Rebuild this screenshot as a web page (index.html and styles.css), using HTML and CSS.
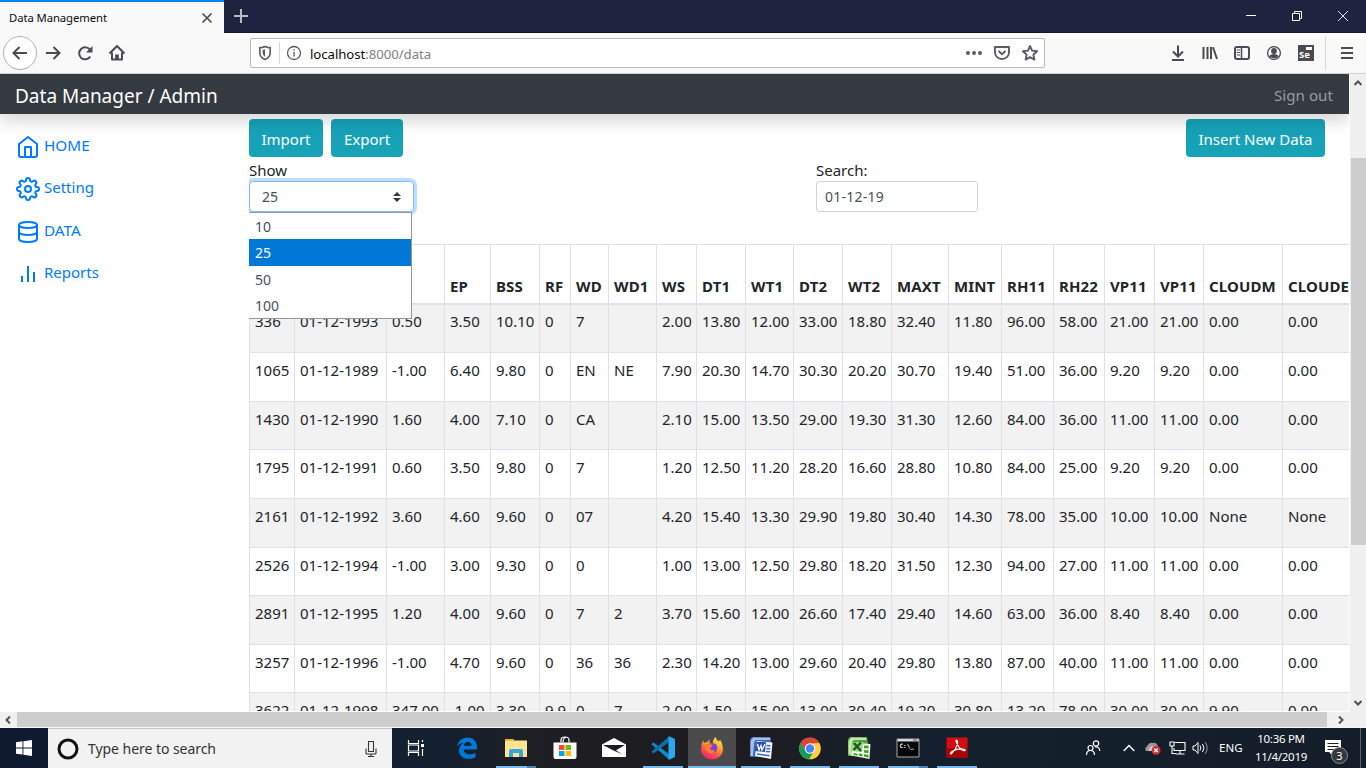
FILE: index.html
```html
<!DOCTYPE html>
<html lang="en">
<head>
<meta charset="utf-8">
<title>Data Management</title>
<link rel="stylesheet" href="styles.css">
</head>
<body>
<div class="screen">
  <header class="titlebar">
    <div class="tab"><span class="tab-title">Data Management</span>
      <svg class="tab-close" width="12" height="12" viewBox="0 0 12 12"><path d="M1.500 1.500l9 9M10.500 1.500l-9 9" stroke="#4a4a4f" stroke-width="1.600"/></svg></div>
    <svg class="new-tab" width="16" height="16" viewBox="0 0 16 16"><path d="M8 1v14M1 8h14" stroke="#b9bac6" stroke-width="2"/></svg>
    <div class="win-controls">
      <svg width="12" height="12" viewBox="0 0 12 12"><path d="M1 5.500h10" stroke="#fff"/></svg>
      <svg width="12" height="12" viewBox="0 0 12 12"><path d="M1.500 3.500h7v7h-7zM3.500 3.500v-2h7v7h-2" stroke="#fff" fill="none"/></svg>
      <svg width="12" height="12" viewBox="0 0 12 12"><path d="M1 1l10 10M11 1L1 11" stroke="#fff" stroke-width=".9"/></svg>
    </div>
  </header>

  <div class="toolbar">
    <div class="nav-icons">
      <span class="back"><svg width="18" height="18" viewBox="0 0 18 18"><path d="M16 9H2.500M8.500 3l-6 6 6 6"/></svg></span>
      <svg width="18" height="18" viewBox="0 0 18 18"><path d="M2 9h13.500M9.500 3l6 6-6 6"/></svg>
      <svg width="18" height="18" viewBox="0 0 18 18"><path d="M14.200 12.600A6 6 0 1 1 14 5.800"/><path d="M16.500 2v6.500H10z" fill="#4a4a4f" stroke="none"/></svg>
      <svg width="18" height="18" viewBox="0 0 18 18"><path d="M1.500 9.500L9 2l7.500 7.500M4 8.500V15.500h10V8.500" stroke-linejoin="round"/><path d="M7.200 15.500v-5h3.600v5z" fill="#4a4a4f" stroke="none"/></svg>
    </div>
    <div class="urlbar">
      <svg class="shield" width="14" height="16" viewBox="0 0 14 16"><path d="M1.800 2.800Q5 2.500 7 1.500q2 1 5.200 1.300v4.700q0 5-5.200 7-5.200-2-5.200-7z" fill="none" stroke="#5b5b60" stroke-width="1.600"/><path d="M7 4.300v7.500q-2.400-1.600-2.400-4.500V5z" fill="#5b5b60" stroke="none"/></svg>
      <span class="url-sep"></span>
      <svg class="info" width="16" height="16" viewBox="0 0 16 16"><circle cx="8" cy="8" r="6.500"/><path d="M8 7v4.500M8 4.200v1.600"/></svg>
      <span class="url"><b>localhost</b>:8000/data</span>
      <svg class="dots" width="18" height="16" viewBox="0 0 18 16"><g fill="#5b5b60"><circle cx="3" cy="8" r="2"/><circle cx="9" cy="8" r="2"/><circle cx="15" cy="8" r="2"/></g></svg>
      <svg class="pocket" width="18" height="16" viewBox="0 0 18 16"><path d="M2 2h14v5.500a7 6.500 0 0 1-14 0z" stroke-linejoin="round"/><path d="M5.500 6L9 9.300 12.500 6"/></svg>
      <svg class="star" width="18" height="18" viewBox="0 0 18 18"><path d="M9 2l2.100 4.600 5 .6-3.700 3.400 1 5L9 13.100l-4.400 2.500 1-5L1.900 7.200l5-.6z" stroke-linejoin="round"/></svg>
    </div>
    <div class="tool-icons">
      <svg width="16" height="18" viewBox="0 0 16 18"><path d="M8 1.500V12M3 7.500l5 5 5-5M2 16h12"/></svg>
      <svg width="16" height="16" viewBox="0 0 16 16"><path d="M1.500 2v12M5.500 2v12M9 2v12M11 2.300l4 11.700"/></svg>
      <svg width="18" height="16" viewBox="0 0 18 16"><rect x="2" y="2" width="14" height="12" rx="2"/><path d="M8.500 2v12" stroke-width="1.500"/><path d="M4 5h3M4 7.500h3M4 10h3" stroke-width="1"/></svg>
      <svg class="account" width="16" height="16" viewBox="0 0 16 16"><circle cx="8" cy="8" r="6.400"/><circle cx="8" cy="6" r="2.900" fill="#4a4a4f" stroke="none"/><path d="M3.200 11q2-2 4.800-2t4.800 2Q11 13.300 8 13.300T3.200 11z" fill="#4a4a4f" stroke="none"/></svg>
      <span class="se"><i></i>Se</span>
      <span class="tool-sep"></span>
      <svg width="14" height="14" viewBox="0 0 14 14"><path d="M1 2h12M1 7h12M1 12h12"/></svg>
    </div>
  </div>

  <div class="viewport">
    <div class="page">
      <nav class="navbar"><span class="brand">Data Manager / Admin</span><a class="signout">Sign out</a></nav>
      <div class="body">
        <aside class="sidebar">
          <a><svg viewBox="0 0 24 24"><path d="M3 9l9-7 9 7v11a2 2 0 0 1-2 2H5a2 2 0 0 1-2-2z"/><path d="M9 22V12h6v10"/></svg><span class="caps">HOME</span></a>
          <a><svg viewBox="0 0 24 24"><circle cx="12" cy="12" r="3"/><path d="M19.400 15a1.650 1.650 0 0 0 .33 1.820l.06.06a2 2 0 0 1-2.830 2.830l-.06-.06a1.650 1.650 0 0 0-1.820-.33 1.650 1.650 0 0 0-1 1.510V21a2 2 0 0 1-4 0v-.09A1.650 1.650 0 0 0 9 19.400a1.650 1.650 0 0 0-1.820.33l-.06.06a2 2 0 0 1-2.830-2.830l.06-.06a1.650 1.650 0 0 0 .33-1.820 1.650 1.650 0 0 0-1.510-1H3a2 2 0 0 1 0-4h.09A1.650 1.650 0 0 0 4.600 9a1.650 1.650 0 0 0-.33-1.820l-.06-.06a2 2 0 0 1 2.830-2.830l.06.06a1.650 1.650 0 0 0 1.820.33H9a1.650 1.650 0 0 0 1-1.510V3a2 2 0 0 1 4 0v.09a1.650 1.650 0 0 0 1 1.510 1.650 1.650 0 0 0 1.820-.33l.06-.06a2 2 0 0 1 2.830 2.830l-.06.06a1.650 1.650 0 0 0-.33 1.820V9a1.650 1.650 0 0 0 1.510 1H21a2 2 0 0 1 0 4h-.09a1.650 1.650 0 0 0-1.510 1z"/></svg><span>Setting</span></a>
          <a><svg viewBox="0 0 24 24"><ellipse cx="12" cy="5" rx="9" ry="3"/><path d="M21 12c0 1.660-4 3-9 3s-9-1.340-9-3"/><path d="M3 5v14c0 1.660 4 3 9 3s9-1.340 9-3V5"/></svg><span class="caps">DATA</span></a>
          <a><svg viewBox="0 0 24 24"><path d="M18 20V10M12 20V4M6 20v-6"/></svg><span>Reports</span></a>
        </aside>
        <main class="main">
          <div class="actions">
            <button class="btn import">Import</button><button class="btn export">Export</button><button class="btn insert">Insert New Data</button>
          </div>
          <div class="filters">
            <div class="show">
              <label>Show</label>
              <div class="select"><span>25</span><svg width="8" height="10" viewBox="0 0 8 10"><path d="M4 0l4 4H0zM4 10l4-4H0z" fill="#343a40"/></svg>
                <div class="options"><div>10</div><div class="on">25</div><div>50</div><div>100</div></div>
              </div>
            </div>
            <div class="search"><label>Search:</label><div class="input">01-12-19</div></div>
          </div>
          <table class="data">
            <colgroup><col style="width:45px"><col style="width:92px"><col style="width:58px"><col style="width:46px"><col style="width:49px"><col style="width:31px"><col style="width:38px"><col style="width:48px"><col style="width:40px"><col style="width:49px"><col style="width:48px"><col style="width:49px"><col style="width:49px"><col style="width:57px"><col style="width:53px"><col style="width:52px"><col style="width:51px"><col style="width:50px"><col style="width:49px"><col style="width:79px"><col style="width:79px"></colgroup>
            <thead><tr><th><th><th><th>EP<th>BSS<th>RF<th>WD<th>WD1<th>WS<th>DT1<th>WT1<th>DT2<th>WT2<th>MAXT<th>MINT<th>RH11<th>RH22<th>VP11<th>VP11<th>CLOUDM<th>CLOUDE</tr></thead>
            <tbody>
              <tr><td>336<td>01-12-1993<td>0.50<td>3.50<td>10.10<td>0<td>7<td><td>2.00<td>13.80<td>12.00<td>33.00<td>18.80<td>32.40<td>11.80<td>96.00<td>58.00<td>21.00<td>21.00<td>0.00<td>0.00</tr>
              <tr><td>1065<td>01-12-1989<td>-1.00<td>6.40<td>9.80<td>0<td>EN<td>NE<td>7.90<td>20.30<td>14.70<td>30.30<td>20.20<td>30.70<td>19.40<td>51.00<td>36.00<td>9.20<td>9.20<td>0.00<td>0.00</tr>
              <tr><td>1430<td>01-12-1990<td>1.60<td>4.00<td>7.10<td>0<td>CA<td><td>2.10<td>15.00<td>13.50<td>29.00<td>19.30<td>31.30<td>12.60<td>84.00<td>36.00<td>11.00<td>11.00<td>0.00<td>0.00</tr>
              <tr><td>1795<td>01-12-1991<td>0.60<td>3.50<td>9.80<td>0<td>7<td><td>1.20<td>12.50<td>11.20<td>28.20<td>16.60<td>28.80<td>10.80<td>84.00<td>25.00<td>9.20<td>9.20<td>0.00<td>0.00</tr>
              <tr><td>2161<td>01-12-1992<td>3.60<td>4.60<td>9.60<td>0<td>07<td><td>4.20<td>15.40<td>13.30<td>29.90<td>19.80<td>30.40<td>14.30<td>78.00<td>35.00<td>10.00<td>10.00<td>None<td>None</tr>
              <tr><td>2526<td>01-12-1994<td>-1.00<td>3.00<td>9.30<td>0<td>0<td><td>1.00<td>13.00<td>12.50<td>29.80<td>18.20<td>31.50<td>12.30<td>94.00<td>27.00<td>11.00<td>11.00<td>0.00<td>0.00</tr>
              <tr><td>2891<td>01-12-1995<td>1.20<td>4.00<td>9.60<td>0<td>7<td>2<td>3.70<td>15.60<td>12.00<td>26.60<td>17.40<td>29.40<td>14.60<td>63.00<td>36.00<td>8.40<td>8.40<td>0.00<td>0.00</tr>
              <tr><td>3257<td>01-12-1996<td>-1.00<td>4.70<td>9.60<td>0<td>36<td>36<td>2.30<td>14.20<td>13.00<td>29.60<td>20.40<td>29.80<td>13.80<td>87.00<td>40.00<td>11.00<td>11.00<td>0.00<td>0.00</tr>
              <tr><td>3622<td>01-12-1998<td>347.00<td>-1.00<td>3.30<td>9.9<td>0<td>7<td>2.00<td>1.50<td>15.00<td>13.00<td>30.40<td>19.20<td>30.80<td>13.20<td>78.00<td>30.00<td>30.00<td>9.90<td>0.00</tr>
            </tbody>
          </table>
        </main>
      </div>
    </div>
    <div class="vscroll">
      <svg width="8" height="6" viewBox="0 0 8 6"><path d="M.5 5L4 1.500 7.500 5"/></svg>
      <span class="vthumb"></span>
      <svg class="down" width="8" height="6" viewBox="0 0 8 6"><path d="M.5 1L4 4.500 7.500 1"/></svg>
    </div>
  </div>
  <div class="hscroll">
    <svg width="6" height="8" viewBox="0 0 6 8"><path d="M5 .5L1.500 4 5 7.500"/></svg>
    <span class="hthumb"></span>
    <svg width="6" height="8" viewBox="0 0 6 8"><path d="M1 .5L4.500 4 1 7.500"/></svg>
  </div>

  <footer class="taskbar">
    <div class="start"><svg width="16" height="16" viewBox="0 0 16 16"><path d="M0 2.200L6.500 1.300V7.500H0zM7.400 1.200L16 0v7.500H7.400zM0 8.400h6.500v6.200L0 13.700zM7.400 8.400H16V16l-8.600-1.200z" fill="#fff"/></svg></div>
    <div class="task-search">
      <svg width="22" height="22" viewBox="0 0 22 22"><circle cx="11" cy="11" r="9" fill="none" stroke="#111" stroke-width="3"/></svg>
      <span>Type here to search</span>
      <svg width="12" height="18" viewBox="0 0 12 18"><path d="M3.500 1.500h5v10h-5zM1 8.500v4.500q0 1 1 1h8q1 0 1-1V8.500M6 14v2.500M3 16.500h6" fill="none" stroke="#333" stroke-width="1.100"/></svg>
    </div>
    <div class="taskview"><svg width="18" height="18" viewBox="0 0 18 18"><path d="M1.500 1v3.500h10V1M1.500 17v-3.500h10V17M1.500 6h10v6h-10zM15.500 1v2M15.500 10v7" fill="none" stroke="#fff" stroke-width="1.200"/><path d="M14 5h3v3h-3z" fill="#fff"/></svg></div>
    <div class="apps">
      <div class="app"><svg width="24" height="24" viewBox="0 0 24 24"><path d="M2 10.500C3 5 7 1.500 12.500 1.500 18.500 1.500 22 5.500 22 11v2.500H8.700c.2 3 2.500 4.800 5.800 4.800 2.300 0 4.300-.6 6-1.600v4.600c-2 1-4.300 1.500-6.800 1.500C7.500 22.800 4 19.300 4 14.500c0-3.300 1.800-6.200 4.700-7.700C6 7 3.500 8.300 2 10.500zM8.900 9.800h7.600c-.1-2.500-1.300-3.900-3.600-3.900-2.200 0-3.600 1.400-4 3.900z" fill="#0078d7"/></svg></div>
      <div class="app open split"><svg width="24" height="24" viewBox="0 0 24 24"><path d="M1 3h8l1.500 1.500H23V21H1z" fill="#ffe391"/><path d="M1 3h8l1 2H1z" fill="#f0b62b"/><path d="M5 21v-6q0-2 2-2h10q2 0 2 2v6h-4v-4H9v4z" fill="#35a5dc"/></svg></div>
      <div class="app"><svg width="24" height="24" viewBox="0 0 24 24"><path d="M.5 6.500h23V21q0 2-2 2h-19q-2 0-2-2z" fill="#fff"/><path d="M8 6.500V4q0-3 4-3t4 3v2.500M10 6.500q0-5 3-5" fill="none" stroke="#fff" stroke-width="1.200"/><path d="M6 9h5.500v5H6z" fill="#f25022"/><path d="M12.500 9H18v5h-5.500z" fill="#7fba00"/><path d="M6 15h5.500v5H6z" fill="#00a4ef"/><path d="M12.500 15H18v5h-5.500z" fill="#ffb900"/></svg></div>
      <div class="app"><svg width="24" height="24" viewBox="0 0 24 24"><path d="M0 8.500L12 2l12 6.500V21H0z" fill="#fff"/><path d="M1 9h22l-9 5.200 6 4L10.500 14z" fill="#1c1c20"/></svg></div>
      <div class="app open"><svg width="24" height="24" viewBox="0 0 24 24"><path d="M.3 8.300L2.500 6.500 18 18v5.500z" fill="#1687c9"/><path d="M.3 15.700l2.200 1.800L18 6V.5z" fill="#0a6fb0"/><path d="M17.500 0L24 3v18l-6.500 3z" fill="#2ba8ed"/></svg></div>
      <div class="app active"><svg width="24" height="24" viewBox="0 0 24 24"><defs><linearGradient id="fx" x1=".8" y1="0" x2=".3" y2="1"><stop offset="0" stop-color="#fff14f"/><stop offset=".4" stop-color="#ffa027"/><stop offset=".75" stop-color="#ff4455"/><stop offset="1" stop-color="#e32277"/></linearGradient></defs><path d="M3 4.500l1.500 2.500Q6 5.500 7.500 6L9.500 3v4.500Q12 7 13 8 12 4 16 1q0 3 3 4.500l1-2Q23 8 23 13A11 10.500 0 0 1 1 13Q1 8 3 4.500z" fill="url(#fx)"/><circle cx="12.500" cy="12" r="4.800" fill="#7b40dc"/><path d="M5 9q4-2 8 .5l-3 2.500q1 3.500 5 2-1 3.500-5 3.500-5-1-5-8.500z" fill="#ff7c30"/></svg></div>
      <div class="app open"><svg width="24" height="24" viewBox="0 0 24 24"><path d="M4 1l18 .5V6L18 21H1V5q0-4 3-4z" fill="#3c66b4"/><path d="M4 1.500h17V4H8Q5 4 5 8L4 20H1.500V5z" fill="#a4bfe8"/><path d="M8 5l15.500 1.500L22 23 6 20z" fill="#f5f8fd"/><path d="M8 6h9l-1 10-10-1z" fill="#2654a8"/><path d="M8.500 8l1.500 6 2-4.500 1 4.500 3-6" fill="none" stroke="#fff" stroke-width="1.300"/><path d="M17.500 9.500l4 .3M17.300 12.500l4 .3M17 15.500l4 .3M8 18l12.500 1.800" stroke="#3c66b4" stroke-width="1.400"/></svg></div>
      <div class="app open"><svg width="24" height="24" viewBox="0 0 24 24"><circle cx="12" cy="12.500" r="10.800" fill="#ffcd40"/><path d="M2.600 7.100A10.800 10.800 0 0 1 21.400 7.100L12 7.500 7.500 15.500z" fill="#db4437"/><path d="M2.600 7.100A10.800 10.800 0 0 0 11 23.250L16 15 7.500 15z" fill="#0f9d58"/><circle cx="12" cy="12.500" r="5.200" fill="#fff"/><circle cx="12" cy="12.500" r="4.200" fill="#4285f4"/></svg></div>
      <div class="app open"><svg width="24" height="24" viewBox="0 0 24 24"><path d="M4 1l16 .5 1 5-3 13.500H1V5q0-4 3-4z" fill="#51a33b"/><path d="M4 1.500h15.500V4H8Q5 4 5 8L4 18.500H1.500V5z" fill="#c4e8ae"/><path d="M6 6.500L23.500 8 22.500 23 4 19.500z" fill="#edf8e8"/><path d="M6 6h10l-1 10-10-1z" fill="#9bd47f"/><path d="M7 7l7 8M14 6.500L6.500 14" stroke="#145b21" stroke-width="2.400"/><path d="M17 9.500l4.500.3v2.700l-4.500-.3zM17 14l4.500.3V17l-4.500-.3zM6.500 17l4 .7v2l-4-.7zM12 17.500l3.500.5v2.500l-3.500-.7zM17 18.300l4.500.5v2.700l-4.500-.8z" fill="#4ba034"/></svg></div>
      <div class="app open split"><svg width="24" height="24" viewBox="0 0 24 24"><path d="M1 3h22v18H1z" fill="#060606" stroke="#aaa"/><path d="M1.500 3h21v2.500h-21z" fill="#d4d7dc"/><path d="M17 4h4" stroke="#555"/><text x="3.500" y="12" class="cmd-text">C:\_</text></svg></div>
      <div class="app open"><svg width="24" height="24" viewBox="0 0 24 24"><path d="M1.500 1.500h21v20h-21z" fill="#d50d10"/><path d="M1.500 12h21v9.500h-21z" fill="#ac0406"/><path d="M10.800 4.500q2-1 1.700 3-.7 5-6.500 10.500-1.500-.5 1.500-2.700 4.500-2.600 10-2.300 3.500.5 2.500 1.500-2.500 1-6-3.500-2.700-4-3.200-6.500z" fill="none" stroke="#fff" stroke-width="1.200"/></svg></div>
    </div>
    <div class="tray">
      <svg class="people" width="16" height="18" viewBox="0 0 16 18"><g fill="none" stroke="#fff" stroke-width="1.200"><circle cx="5.500" cy="9" r="2.500"/><path d="M1.500 16q0-4.500 4-4.500t4 4.500"/><circle cx="11" cy="4.500" r="2.700"/><path d="M10 8q4.500-.8 4.800 4"/></g></svg>
      <svg class="chev" width="12" height="8" viewBox="0 0 12 8"><path d="M.7 7L6 1.500 11.300 7" fill="none" stroke="#fff" stroke-width="1.300"/></svg>
      <svg class="cloud" width="18" height="14" viewBox="0 0 18 14"><path d="M2 10Q0 7 3 5.500 5 1 9 2q3-1 5 3v5z" fill="#999"/><path d="M5 10Q5 5 10 5q5 0 5 5z" fill="#d5d5d5"/><circle cx="12" cy="9.300" r="4.500" fill="#d13438"/><path d="M10.300 7.600l3.400 3.400M13.700 7.600L10.300 11" stroke="#fff" stroke-width="1.300"/></svg>
      <svg class="net" width="18" height="14" viewBox="0 0 18 14"><path d="M6 1.500h10v8H5V7M11 9.500V13M6.500 13h9M1 1h4v4H1zM3 5v7.500h4" fill="none" stroke="#fff" stroke-width="1.100"/></svg>
      <svg class="vol" width="18" height="14" viewBox="0 0 18 14"><path d="M1 5h2l3-3.500v11L3 9H1zM8 4.500q1.800 2.500 0 5M10.500 3q3 4 0 8" fill="none" stroke="#fff"/><path d="M13 1q4.500 6 0 12" fill="none" stroke="#8b939c"/></svg>
      <span class="lang">ENG</span>
      <div class="clock"><div>10:36 PM</div><div>11/4/2019</div></div>
      <div class="notify"><svg width="18" height="16" viewBox="0 0 18 16"><path d="M1 0h16v12H8v3l-3-3H1z" fill="#fff"/><path d="M3.500 3.500h11M3.500 6.500h11M3.500 9.500h7" stroke="#17202b"/></svg><span>3</span></div>
    </div>
  </footer>
</div>
</body>
</html>
```

FILE: styles.css
```css
* { box-sizing: border-box; }
body { margin: 0; font-family: "Noto Sans", "Open Sans", sans-serif; color: #212529; }
svg { display: block; flex: none; }
.screen { width: 1366px; height: 768px; display: flex; flex-direction: column; overflow: hidden; background: #fff; }

/* Browser window */
.titlebar { height: 33px; flex: none; display: flex; align-items: center; background: #202340; border-bottom: 1px solid #14162c; }
.tab { width: 224px; height: 33px; align-self: flex-start; flex: none; display: flex; align-items: center; justify-content: space-between; padding: 0 11px 0 9px; background: #f9f9fa; border-top: 2px solid #0a84ff; }
.tab-title { font-size: 11.300px; letter-spacing: -.08px; color: #0c0c0d; }
.new-tab { margin-left: 9px; }
.win-controls { margin-left: auto; display: flex; gap: 34px; padding-right: 17px; }
.toolbar { height: 41px; flex: none; display: flex; align-items: center; background: #f9f9fa; border-bottom: 1px solid #d0d0d2; }
.toolbar svg { fill: none; stroke: #4a4a4f; stroke-width: 2; }
.toolbar .info { stroke: #5b5b60; stroke-width: 1.300; }
.toolbar .pocket, .toolbar .star { stroke: #5b5b60; stroke-width: 1.900; }
.toolbar .account { stroke-width: 1.300; }
.nav-icons { display: flex; align-items: center; width: 250px; padding-left: 3px; gap: 14px; }
.back { width: 34px; height: 34px; margin-right: -7px; border: 1px solid #b1b1b3; border-radius: 50%; background: #fff; display: flex; align-items: center; justify-content: center; }
.urlbar { width: 795px; height: 30px; display: flex; align-items: center; border: 1px solid #b9b9bb; border-radius: 2px; background: #fff; padding: 0 5px 0 7px; }
.url-sep { width: 1px; height: 22px; background: #d7d7db; margin: 0 6px 0 7px; }
.url { font-size: 13.200px; letter-spacing: -.05px; color: #808084; margin-left: 8px; padding-top: 2px; }
.url b { font-weight: 400; color: #0c0c0d; }
.toolbar .dots { margin-left: auto; stroke: none; margin-right: 10px; }
.pocket { margin-right: 10px; }
.tool-icons { flex: 1; display: flex; align-items: center; padding: 0 12px 0 125px; gap: 16px; }
.tool-icons svg:nth-child(3) { margin: 0 -1px; }
.se { width: 16px; height: 16px; background: #4a4a4f; color: #fff; font: bold 9.500px/9px "Noto Sans", sans-serif; padding: 5px 0 0 1px; position: relative; }
.se i { position: absolute; width: 6px; height: 3px; right: 2px; top: 2px; background: #fff; }
.tool-sep { width: 1px; height: 34px; background: #d7d7db; margin: 0 -2px 0 -5px; }

.viewport { height: 638px; flex: none; display: flex; }
.page { width: 1349px; height: 637px; overflow: hidden; background: #fff; }
.navbar { height: 40px; position: relative; z-index: 2; display: flex; align-items: center; justify-content: space-between; padding: 3px 16px 0 15px; background: #343a40; box-shadow: 0 8px 16px rgba(0, 0, 0, .15); }
.brand { font-size: 19px; line-height: 30px; color: #fff; }
.signout { font-size: 15.200px; line-height: 22px; padding-bottom: 1px; color: #999c9f; }
.body { display: flex; }
.sidebar { width: 249px; flex: none; padding-top: 11px; }
.sidebar a { height: 42.400px; display: flex; align-items: flex-start; padding: 8px 0 0 16px; color: #007bff; font-size: 15px; line-height: 24px; }
.sidebar svg { width: 24px; height: 24px; margin-top: 2px; fill: none; stroke: #007bff; stroke-width: 2; stroke-linecap: round; stroke-linejoin: round; }
.sidebar a:last-child svg { stroke-linecap: butt; }
.sidebar span { margin-left: 4px; }
.sidebar .caps { font-size: 15.300px; }
.main { width: 1100px; flex: none; overflow: hidden; padding-top: 5px; height: 597px; }
.actions { display: flex; height: 38px; padding-right: 24px; }
.btn { height: 38px; padding: 2px 0 0; border: 0; border-radius: 4px; background: #17a2b8; color: #fff; font: 15px "Noto Sans", sans-serif; white-space: nowrap; }
.import { width: 74px; margin-right: 8px; }
.export { width: 72px; }
.insert { width: 139px; margin-left: auto; }
.filters { display: flex; height: 87px; font-size: 15px; line-height: 24px; }
.filters label { display: block; height: 24px; padding-top: 1px; }
.show { width: 567px; }
.select { position: relative; z-index: 3; width: 165px; height: 31px; border: 1px solid #80bdff; border-radius: 4px; box-shadow: 0 0 0 3px rgba(0, 123, 255, .25); background: #fff; display: flex; align-items: center; justify-content: space-between; padding: 0 12px; font-size: 14px; color: #495057; }
.options { position: absolute; left: -2px; top: 30px; width: 164px; height: 107px; border: 1px solid #98989b; background: #fff; font-size: 14px; }
.options div { height: 26.400px; line-height: 27px; padding-left: 6px; }
.options .on { background: #0078d7; color: #fff; }
.input { width: 162px; height: 31px; border: 1px solid #ced4da; border-radius: 3px; padding: 0 8px; font-size: 14px; letter-spacing: .25px; line-height: 30px; color: #495057; }
.data { table-layout: fixed; width: 1112px; border-collapse: separate; border-spacing: 0; font-size: 15px; line-height: 24px; }
.data th, .data td { border-left: 1px solid #dee2e6; border-top: 1px solid #dee2e6; padding: 0 0 0 5px; text-align: left; white-space: nowrap; }
.data th { height: 59px; vertical-align: bottom; padding-bottom: 5px; font-weight: 700; font-size: 15px; letter-spacing: .12px; }
.data td { height: 49px; vertical-align: top; padding-top: 6px; line-height: 23px; }
.data tbody tr:first-child td { border-top-width: 2px; padding-top: 5px; }
.data tbody tr:nth-child(3) td, .data tbody tr:nth-child(6) td, .data tbody tr:nth-child(8) td { height: 48px; }
.data tbody tr:nth-child(odd) { background: #f2f2f2; }
.vscroll { width: 17px; display: flex; flex-direction: column; align-items: center; background: #f0f0f0; border-left: 1px solid #fff; padding-top: 6px; }
.vscroll svg, .hscroll svg { fill: none; stroke: #505050; stroke-width: 2; }
.vthumb { width: 15px; height: 387px; margin-top: 72px; background: #cdcdcd; }
.vscroll .down { margin-top: 155px; }
.hscroll { height: 16px; flex: none; width: 1366px; display: flex; align-items: center; background: #f0f0f0; border-bottom: 1px solid #f7f7f7; padding: 0 22px 0 5px; }
.hthumb { width: 1310px; height: 15px; margin: 0 11px 0 6px; background: #cdcdcd; flex: none; }

/* Desktop taskbar */
.taskbar { height: 40px; flex: none; display: flex; background: linear-gradient(90deg, #0f1a30 0%, #14202f 32%, #1e1e22 40%, #1d1d21 55%, #14202d 68%, #131e29 100%); color: #fff; }
.start { width: 48px; display: flex; align-items: center; justify-content: center; }
.task-search { width: 344px; background: #f2f2f2; border-top: 1px solid #c3c3c3; display: flex; align-items: center; padding: 0 15px 0 9px; color: #333; font-size: 14px; }
.task-search span { margin: 0 auto 0 9px; letter-spacing: -.05px; }
.taskview { width: 50px; padding-left: 15px; display: flex; align-items: center; }
.apps { display: flex; }
.app { width: 49px; height: 40px; display: flex; align-items: center; justify-content: center; background: no-repeat 5px 38px / 40px 2px; }
.open { background-image: linear-gradient(#76b9ed, #76b9ed); }
.split { background-image: linear-gradient(90deg, #76b9ed 31px, #4d80aa 31px); }
.active { background-image: linear-gradient(#76b9ed, #76b9ed), linear-gradient(#4b4b4d, #4b4b4d); background-position: 1px 38px, 1px 0; background-size: 48px 2px, 48px 40px; }
.cmd-text { font: bold 6px "DejaVu Sans Mono", monospace; fill: #fff; }
.tray { margin-left: auto; width: 281px; display: flex; align-items: center; font-size: 12px; }
.chev { margin-left: 22px; }
.cloud { margin-left: 9px; }
.net { margin-left: 7px; }
.vol { margin-left: 5px; }
.lang { margin-left: 9px; width: 26px; font-size: 11.500px; padding-bottom: 1px; }
.clock { margin-left: 7px; width: 58px; text-align: center; font-size: 11.500px; line-height: 18px; white-space: nowrap; padding-bottom: 1px; letter-spacing: -.3px; }
.notify { position: relative; margin-left: 14px; width: 37px; height: 40px; padding-top: 12px; border-right: 1px solid #59616a; }
.notify span { position: absolute; left: 7px; top: 19px; width: 17px; height: 17px; border: 1px solid #8b8f94; border-radius: 50%; background: #34383d; font-size: 11px; line-height: 15px; text-align: center; }
```
